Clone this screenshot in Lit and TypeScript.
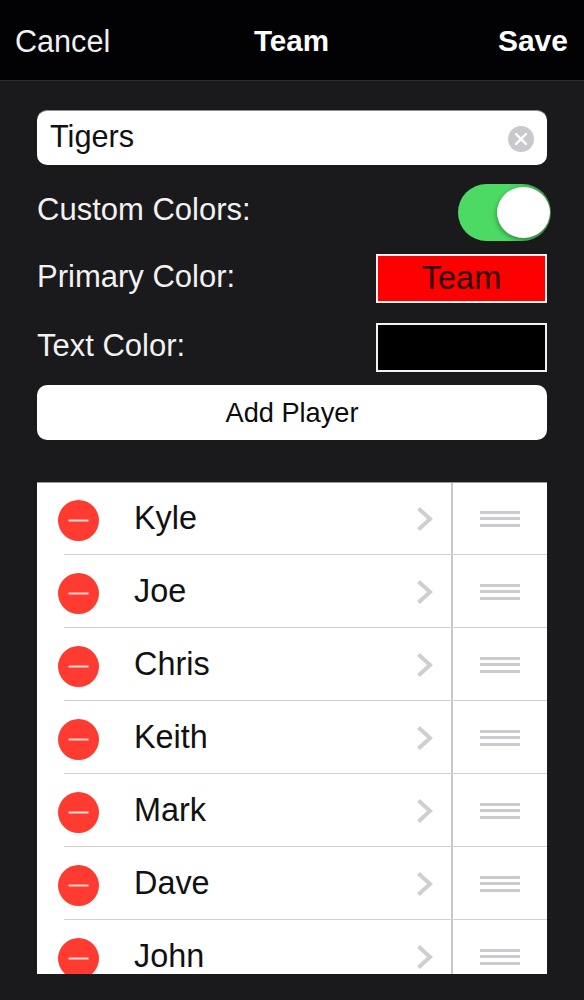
import { LitElement, html, css } from "lit";
import { customElement } from "lit/decorators.js";

const PLAYERS = ["Kyle", "Joe", "Chris", "Keith", "Mark", "Dave", "John"];

@customElement("app-root")
export class AppRoot extends LitElement {
  static styles = css`
    :host {
      display: block;
      width: 584px;
      height: 1000px;
      overflow: hidden;
      background: #1a191b;
      font-family: "Liberation Sans", Arial, sans-serif;
      color: #fff;
    }
    .nav {
      height: 80px;
      box-sizing: content-box;
      background: #020103;
      border-bottom: 1px solid #2c2b2d;
      padding: 0 16px 0 15px;
      display: grid;
      grid-template-columns: 1fr auto 1fr;
      align-items: center;
      font-size: 30.6px;
    }
    .nav > div {
      padding-top: 2px;
    }
    .nav .title {
      font-weight: 700;
      font-size: 29.6px;
    }
    .nav .cancel {
      color: #f0f0f0;
    }
    .nav .save {
      font-weight: 700;
      font-size: 30px;
      text-align: right;
    }
    .content {
      padding: 29px 37px 0;
      display: flex;
      flex-direction: column;
    }
    .field {
      height: 55px;
      box-sizing: border-box;
      background: #fff;
      border-radius: 10px;
      border-top: 1px solid #8e8e90;
      padding: 0 13px;
      display: flex;
      align-items: center;
      justify-content: space-between;
      color: #111;
      font-size: 30.7px;
    }
    .field span {
      padding-bottom: 2px;
    }
    .clear {
      width: 26px;
      height: 26px;
      display: block;
      margin-top: 2px;
    }
    .setting {
      display: flex;
      align-items: center;
      justify-content: space-between;
      font-size: 31px;
      color: #f2f2f2;
    }
    .setting > span {
      padding-bottom: 4px;
    }
    .toggle-row {
      margin-top: 19px;
      height: 57px;
    }
    .toggle-row > span {
      padding-bottom: 6px;
    }
    .primary-row {
      margin-top: 13px;
      height: 49px;
    }
    .text-row {
      margin-top: 20px;
      height: 49px;
    }
    .toggle {
      width: 93px;
      height: 57px;
      box-sizing: border-box;
      margin-right: -4px;
      border-radius: 29px;
      padding: 3px 1px 3px 39px;
      background: linear-gradient(90deg, #4cd964 0 55%, #45c65a 72%, #3a8f49 100%);
    }
    .knob {
      width: 53px;
      height: 51px;
      border-radius: 50%;
      background: #fff;
      box-shadow: -1px 2px 4px rgba(0, 0, 0, 0.3);
    }
    .swatch {
      width: 171px;
      height: 49px;
      box-sizing: border-box;
      border: 2px solid #f4f0f0;
      display: flex;
      align-items: center;
      justify-content: center;
      font-size: 32.5px;
    }
    .swatch.red {
      background: #fe0000;
      color: #2a0000;
    }
    .swatch.black {
      background: #000;
    }
    .add {
      margin-top: 13px;
      height: 55px;
      border-radius: 10px;
      background: #fff;
      color: #0c0c0c;
      display: flex;
      align-items: center;
      justify-content: center;
      font-size: 27.2px;
    }
    .list {
      margin-top: 42px;
      height: 492px;
      overflow: hidden;
      background:
        linear-gradient(#9a9a9c, #9a9a9c) 0 0 / 100% 1px no-repeat,
        linear-gradient(#c8c7cc, #c8c7cc) 414px 0 / 2px 100% no-repeat,
        #fff;
    }
    .row {
      height: 72px;
      display: flex;
      align-items: center;
      color: #111;
      font-size: 32.4px;
    }
    .sep {
      height: 1px;
      margin-left: 27px;
      background: #d0cfd3;
    }
    .minus {
      width: 41px;
      height: 41px;
      margin-left: 21px;
      margin-top: 4px;
      flex: none;
      display: block;
    }
    .name {
      margin-left: 35px;
      flex: 1;
    }
    .chev {
      width: 18px;
      height: 26px;
      flex: none;
      display: block;
      margin-right: 18px;
      margin-top: 1px;
    }
    .handle {
      width: 95px;
      flex: none;
      display: flex;
      justify-content: center;
      margin-top: 1px;
      box-sizing: border-box;
    }
    .handle svg {
      width: 40px;
      height: 16px;
      display: block;
    }
  `;

  render() {
    return html`
      <div class="nav">
        <div class="cancel">Cancel</div>
        <div class="title">Team</div>
        <div class="save">Save</div>
      </div>
      <div class="content">
        <div class="field">
          <span>Tigers</span>
          <svg class="clear" viewBox="0 0 26 26">
            <circle cx="13" cy="13" r="13" fill="#c9c8cc"></circle>
            <path d="M8 8l10 10M18 8L8 18" stroke="#fff" stroke-width="2.4" stroke-linecap="round"></path>
          </svg>
        </div>
        <div class="setting toggle-row">
          <span>Custom Colors:</span>
          <div class="toggle"><div class="knob"></div></div>
        </div>
        <div class="setting primary-row">
          <span>Primary Color:</span>
          <div class="swatch red">Team</div>
        </div>
        <div class="setting text-row">
          <span>Text Color:</span>
          <div class="swatch black"></div>
        </div>
        <div class="add">Add Player</div>
        <div class="list">
          ${PLAYERS.map(
            (p, i) => html`
              ${i > 0 ? html`<div class="sep"></div>` : ""}
              <div class="row">
                <svg class="minus" viewBox="0 0 41 41">
                  <circle cx="20.5" cy="20.5" r="20.5" fill="#fd3b30"></circle>
                  <rect x="10.5" y="19.5" width="20" height="2" fill="#ffd9d5"></rect>
                </svg>
                <div class="name">${p}</div>
                <svg class="chev" viewBox="0 0 18 26">
                  <path d="M2.5 2.5L14 13 2.5 23.5" fill="none" stroke="#cfced2" stroke-width="4"></path>
                </svg>
                <div class="handle">
                  <svg viewBox="0 0 40 16">
                    <rect y="0" width="40" height="3" fill="#cbcace"></rect>
                    <rect y="6" width="40" height="3" fill="#cbcace"></rect>
                    <rect y="13" width="40" height="3" fill="#cbcace"></rect>
                  </svg>
                </div>
              </div>
            `
          )}
        </div>
      </div>
    `;
  }
}
